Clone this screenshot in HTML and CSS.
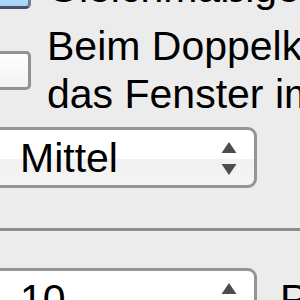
FILE: index.html
```html
<!DOCTYPE html>
<html lang="de">
<head>
    <meta charset="UTF-8">
    <title>Allgemein</title>
    <link rel="stylesheet" href="styles.css">
</head>
<body>
    <div class="pane">
        <div class="check-row first">
            <span class="box checked"></span>
            <span class="label">Gleichmäßiges Scrollen verwenden</span>
        </div>
        <div class="check-row">
            <span class="box"></span>
            <span class="label">Beim Doppelklick auf die Titelleiste<br>das Fenster im Dock ablegen</span>
        </div>
        <div class="popup-row">
            <div class="popup">
                <span>Mittel</span>
                <svg class="arrows" width="16" height="33" viewBox="0 0 16 33">
                    <path d="M8 0 L15.5 11 L0.5 11 Z" fill="#4d4d4d"/>
                    <path d="M0.5 22 L15.5 22 L8 33 Z" fill="#4d4d4d"/>
                </svg>
            </div>
        </div>
        <hr class="sep">
        <div class="popup-row">
            <div class="popup">
                <span>10</span>
                <svg class="arrows" width="16" height="33" viewBox="0 0 16 33">
                    <path d="M8 0 L15.5 11 L0.5 11 Z" fill="#4d4d4d"/>
                    <path d="M0.5 22 L15.5 22 L8 33 Z" fill="#4d4d4d"/>
                </svg>
            </div>
            <span class="label">Programme</span>
        </div>
    </div>
</body>
</html>
```

FILE: styles.css
```css
html, body { margin: 0; padding: 0; }
body {
    display: flow-root;
    width: 300px;
    height: 300px;
    overflow: hidden;
    background-color: #ececec; /* Fenstergrau */
    font-family: "Liberation Sans", Arial, sans-serif;
    font-size: 41px;
    line-height: 48px;
    color: #000;
}
.pane { margin: -36px 0 0 -8px; width: 600px; }

.check-row { display: flex; align-items: center; gap: 16px; margin-bottom: 9px; }
.check-row.first { margin-bottom: 10px; }
.check-row.first .box { margin-top: 2px; }
.label { white-space: nowrap; }
.box {
    flex: none;
    width: 39px;
    height: 39px;
    box-sizing: border-box;
    border: 3px solid #929292;
    border-radius: 5px;
    background: linear-gradient(#ffffff, #f2f2f2);
}
.box.checked {
    border-color: #6f7c99;
    border-bottom-color: #474f6d;
    background: linear-gradient(#cfe7fc, #a6d2f7);
}

.popup-row { display: flex; align-items: center; gap: 23px; margin-top: 9px; }
.popup {
    display: flex;
    align-items: center;
    justify-content: space-between;
    box-sizing: border-box;
    width: 269px;
    height: 61px;
    margin-left: -4px;
    padding: 0 17px 0 29px;
    border: 3px solid #959595;
    border-radius: 9px;
    background: linear-gradient(#ffffff 0, #ffffff 52%, #f1f1f1 52%, #f5f5f5 100%);
}
.arrows { display: block; margin-top: 1px; }

.sep {
    margin: 40px 0 37px 0;
    border: none;
    border-top: 3px solid #8d8d8d;
    height: 0;
}
.sep + .popup-row { margin-top: 0; }
```
